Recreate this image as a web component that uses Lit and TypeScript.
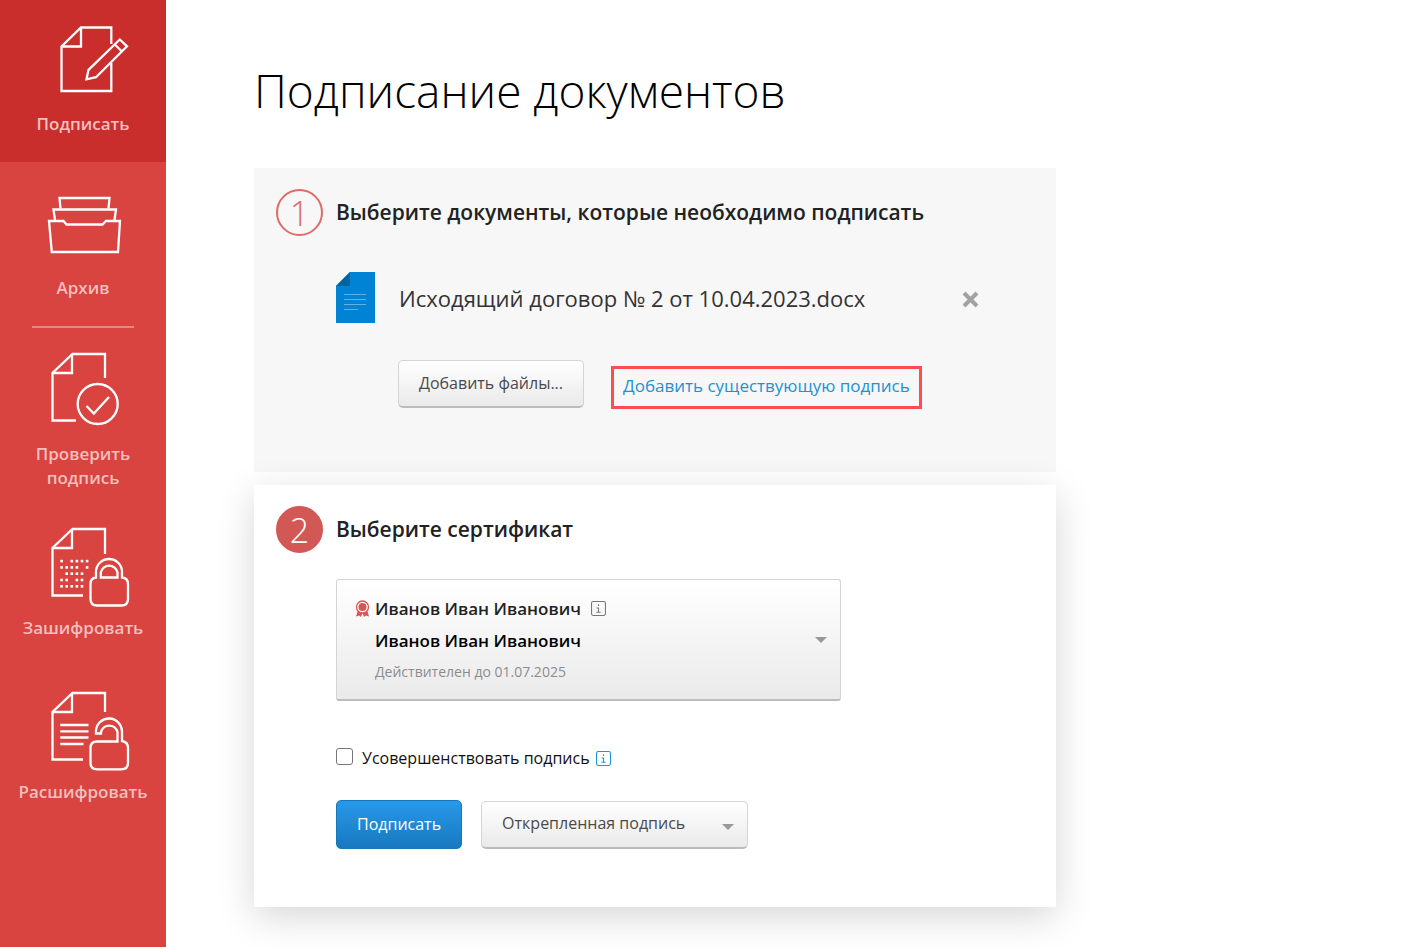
import { LitElement, html, css, svg } from "lit";
import { customElement, state } from "lit/decorators.js";
import { classMap } from "lit/directives/class-map.js";

const page = (y: number, cutRight: number, cutBottom: number) => svg`
  <path d="M105 ${y + cutRight}V${y + 1}H72.5L52.5 ${y + 20}V${y + 67.5}H${cutBottom}"/>
  <path d="M72 ${y + 1}V${y + 20}H52.500"/>`;

const dotRows: number[][] = [
  [0, 2, 3, 4, 5],
  [0, 1, 2, 3, 5],
  [1, 2, 3, 4],
  [0, 1, 3, 4],
  [0, 1, 2, 3, 4],
];

const icons = {
  sign: html`<svg class="icon" viewBox="0 20 166 80" aria-hidden="true">
    <path d="M111.300 44V27.500H81L61.500 46.500V91H111.300V63"/>
    <path d="M81 27.500V46.500H62"/>
    <path d="M119.800 39.500L127 46.300L96 77.200L86.500 79.300L88.500 69.800ZM114.800 44.500L121.700 51.300"/>
  </svg>`,
  archive: html`<svg class="icon" viewBox="0 184 166 80" aria-hidden="true">
    <path d="M60.500 208.500L59.500 198H109.500L108.500 208.500"/>
    <path d="M55 220L53.500 209.500H116L114.500 220"/>
    <path d="M49 221H63.500L66.500 224.500H102.500L106 221H120L118 252H51.800Z"/>
  </svg>`,
  verify: html`<svg class="icon" viewBox="0 350 166 80" aria-hidden="true">
    ${page(353, 25, 76)}
    <circle cx="97.700" cy="404" r="20"/>
    <path d="M86.500 406L93.800 413.500L109 397"/>
  </svg>`,
  encrypt: html`<svg class="icon" viewBox="0 524 166 80" aria-hidden="true">
    ${page(528, 26, 83)}
    ${dotRows.map((r, j) => r.map((c) => svg`<rect class="dot" x=${60.3 + c * 5.1} y=${559.8 + j * 6.3} width="2.600" height="2.600"/>`))}
    <path d="M96 577.500V572A13 13 0 0 1 122 572V577.500Q128 578 128 584V599Q128 605.500 121.500 605.500H97Q90.500 605.500 90.500 599V584Q90.500 578 96 577.500Z"/>
    <path d="M100.800 577.500V572.500A8.500 8.500 0 0 1 117.500 572.500V577.500Z"/>
  </svg>`,
  decrypt: html`<svg class="icon" viewBox="0 688 166 80" aria-hidden="true">
    ${page(692, 20, 83)}
    <path d="M60.300 725H88.500M60.300 731.300H88.500M60.300 737.500H88.500M60.300 744H83.500"/>
    <path d="M122 741V732A13 13 0 0 0 96 731V733.500H101V732A8.500 8.500 0 0 1 117.500 732V741.500H97Q90.500 741.500 90.500 748V763Q90.500 769.300 97 769.300H121.500Q128 769.300 128 763V748Q128 742 122 741Z"/>
  </svg>`,
};

const info = html`<svg class="info" viewBox="0 0 14 14" aria-hidden="true">
  <rect x="0.500" y="0.500" width="13" height="13" rx="1.500"/>
  <path d="M7 3V4.600M5.300 6.500H7V10.500M5 10.500H9"/>
</svg>`;

@customElement("app-root")
export class AppRoot extends LitElement {
  @state() private active = "sign";
  @state() private hasFile = true;

  static styles = css`
    :host {
      display: flex;
      min-height: 100vh;
      background: #fff;
      color: #222;
      font-family: "Open Sans", "Noto Sans", sans-serif;
      font-size: 17px;
      line-height: 24px;
    }
    * { box-sizing: border-box; }
    button, select, input { font: inherit; color: inherit; margin: 0; }
    button, select { cursor: pointer; }
    .side { flex: none; width: 166px; background: #d94440; }
    .item {
      display: flex;
      flex-direction: column;
      gap: 12px;
      padding: 22px 0 26px;
      color: #f4bfbd;
      font-weight: 600;
      text-align: center;
      text-decoration: none;
    }
    .item:first-child { padding-top: 20px; }
    .item.tight { padding-bottom: 12px; }
    .item.active { background: #c92e2c; }
    .rule { height: 2px; margin: 0 32px; border: 0; background: #e88784; }
    .icon {
      display: block;
      width: 166px;
      height: 80px;
      overflow: visible;
      fill: none;
      stroke: #fff;
      stroke-width: 2.3;
    }
    .icon .dot { fill: #fff; stroke: none; }
    .main { flex: 1; min-width: 0; padding: 56px 88px 40px; }
    h1 {
      margin: 0 0 44px;
      color: #000;
      font-size: 46px;
      font-weight: 300;
      line-height: 68px;
    }
    .cards { display: grid; gap: 13px; max-width: 802px; }
    .card {
      display: grid;
      grid-template-columns: 47px 1fr;
      column-gap: 13px;
      padding: 21px 77px 58px 22px;
    }
    .docs { background: #f7f7f7; padding-bottom: 63px; }
    .cert { background: #fff; box-shadow: 0 10px 36px rgba(0, 0, 0, 0.16); }
    .num {
      display: grid;
      place-items: center;
      height: 47px;
      border: 2px solid #dd6b68;
      border-radius: 50%;
      color: #dd6b68;
      font-size: 34px;
      font-weight: 300;
    }
    .cert .num { border-color: #d25855; background: #d25855; color: #fff; }
    h2 {
      margin: 0;
      font-size: 21px;
      font-weight: 600;
      line-height: 47px;
    }
    .body { grid-column: 2; }
    .file {
      display: flex;
      align-items: center;
      gap: 24px;
      height: 51px;
      margin-top: 36px;
      color: #333;
      font-size: 22px;
    }
    .name { flex: 1; }
    .doc { width: 39px; height: 51px; }
    .close { display: grid; padding: 4px 0 0; border: 0; background: none; }
    .close svg { width: 17px; height: 17px; stroke: #a2a2a2; stroke-width: 4; }
    .row { display: flex; }
    .add { gap: 27px; margin: 37px 0 0 62px; align-items: flex-start; }
    .btn {
      height: 48px;
      padding: 0 20px 2px;
      border: 1px solid #d4d4d4;
      border-bottom: 2px solid #bcbcbc;
      border-radius: 5px;
      background: linear-gradient(#fff, #eaeaea);
      color: #4a4a4a;
      font-size: 16px;
      white-space: nowrap;
    }
    .link {
      margin-top: 6px;
      padding: 5px 9px 8px;
      border: 3px solid #ff4d4d;
      color: #2291d3;
      text-decoration: none;
      white-space: nowrap;
    }
    .picker {
      display: flex;
      align-items: center;
      justify-content: space-between;
      width: 100%;
      max-width: 505px;
      height: 122px;
      margin-top: 26px;
      padding: 0 13px 0 18px;
      border: 1px solid #d4d4d4;
      border-bottom: 2px solid #bcbcbc;
      border-radius: 3px;
      background: linear-gradient(#fff, #eaeaea);
      text-align: left;
    }
    .person { display: grid; grid-template-columns: 15px auto; column-gap: 5px; line-height: 32px; font-weight: 600; }
    .who { display: flex; align-items: center; gap: 10px; }
    .person > :nth-child(n + 3) { grid-column: 2; }
    .company { color: #000; }
    .until { color: #8c8c8c; font-size: 14px; font-weight: 400; line-height: 30px; }
    .medal { width: 15px; height: 17px; align-self: center; }
    .arrow { flex: none; width: 12px; height: 6px; fill: #999; }
    .info { flex: none; width: 15px; height: 15px; fill: none; stroke: #777; stroke-width: 1; }
    .check { display: flex; gap: 9px; margin: 45px 0 30px; color: #111; font-size: 16px; }
    .check input {
      appearance: none;
      width: 17px;
      height: 17px;
      margin-top: 2px;
      border: 1px solid #767676;
      border-radius: 3px;
      background: #fff;
    }
    .check input:checked { background: #1e8ad6; }
    .check label { display: flex; align-items: center; gap: 6px; }
    .check .info { stroke: #1c94da; }
    .actions { gap: 19px; }
    .primary {
      height: 49px;
      border: 1px solid #1877b8;
      background: linear-gradient(#2799ea, #1878bf);
      color: #fff;
    }
    .kind { display: inline-grid; align-items: center; }
    .kind > * { grid-area: 1 / 1; }
    .kind select { appearance: none; width: 267px; }
    .kind .arrow { justify-self: end; margin: 4px 14px 0 0; pointer-events: none; }
  `;

  private item(id: string, icon: unknown, label: string, tight = false) {
    return html`<a href="#${id}" class=${classMap({ item: true, tight, active: this.active === id })}
      @click=${() => (this.active = id)}>${icon}<span>${label}</span></a>`;
  }

  render() {
    const arrow = html`<svg class="arrow" viewBox="0 0 12 6" aria-hidden="true"><path d="M0 0H12L6 6Z"/></svg>`;
    return html`
      <nav class="side">
        ${this.item("sign", icons.sign, "Подписать")}
        ${this.item("archive", icons.archive, "Архив")}
        <hr class="rule" />
        ${this.item("verify", icons.verify, "Проверить подпись", true)}
        ${this.item("encrypt", icons.encrypt, "Зашифровать")}
        ${this.item("decrypt", icons.decrypt, "Расшифровать")}
      </nav>
      <main class="main">
        <h1>Подписание документов</h1>
        <div class="cards">
          <section class="card docs">
            <div class="num">1</div>
            <h2>Выберите документы, которые необходимо подписать</h2>
            <div class="body">
              ${this.hasFile ? html`<div class="file">
                <svg class="doc" viewBox="0 0 39 51" aria-hidden="true">
                  <path fill="#0083d4" d="M14 0H39V51H0V14Z"/>
                  <path fill="#00649f" d="M14 0V14H0Z"/>
                  <path stroke="#5db4e8" d="M8 22.500H30M8 27.500H30M8 32.500H30M8 37.500H22"/>
                </svg>
                <span class="name">Исходящий договор № 2 от 10.04.2023.docx</span>
                <button class="close" aria-label="Удалить" @click=${() => (this.hasFile = false)}>
                  <svg viewBox="0 0 17 17" aria-hidden="true"><path d="M2 2L15 15M15 2L2 15"/></svg>
                </button>
              </div>` : ""}
              <div class="row add">
                <button class="btn">Добавить файлы...</button>
                <a class="link" href="#signature">Добавить существующую подпись</a>
              </div>
            </div>
          </section>
          <section class="card cert">
            <div class="num">2</div>
            <h2>Выберите сертификат</h2>
            <div class="body">
              <button class="picker" aria-haspopup="listbox">
                <span class="person">
                  <svg class="medal" viewBox="0 0 15 17" aria-hidden="true">
                    <path fill="#d25855" d="M3 10L1 16.500L4 15.500L6 17L7.500 13L9 17L11 15.500L14 16.500L12 10Z"/>
                    <circle cx="7.500" cy="7" r="6" fill="#fff" stroke="#d25855" stroke-width="1.300"/>
                    <circle cx="7.500" cy="7" r="4" fill="#d25855"/>
                  </svg>
                  <span class="who">Иванов Иван Иванович ${info}</span>
                  <span class="company">Иванов Иван Иванович</span>
                  <span class="until">Действителен до 01.07.2025</span>
                </span>
                ${arrow}
              </button>
              <div class="check">
                <input type="checkbox" id="improve" />
                <label for="improve">Усовершенствовать подпись ${info}</label>
              </div>
              <div class="row actions">
                <button class="btn primary">Подписать</button>
                <span class="kind">
                  <select class="btn" aria-label="Вид подписи">
                    <option>Открепленная подпись</option>
                    <option>Присоединенная подпись</option>
                  </select>
                  ${arrow}
                </span>
              </div>
            </div>
          </section>
        </div>
      </main>
    `;
  }
}
